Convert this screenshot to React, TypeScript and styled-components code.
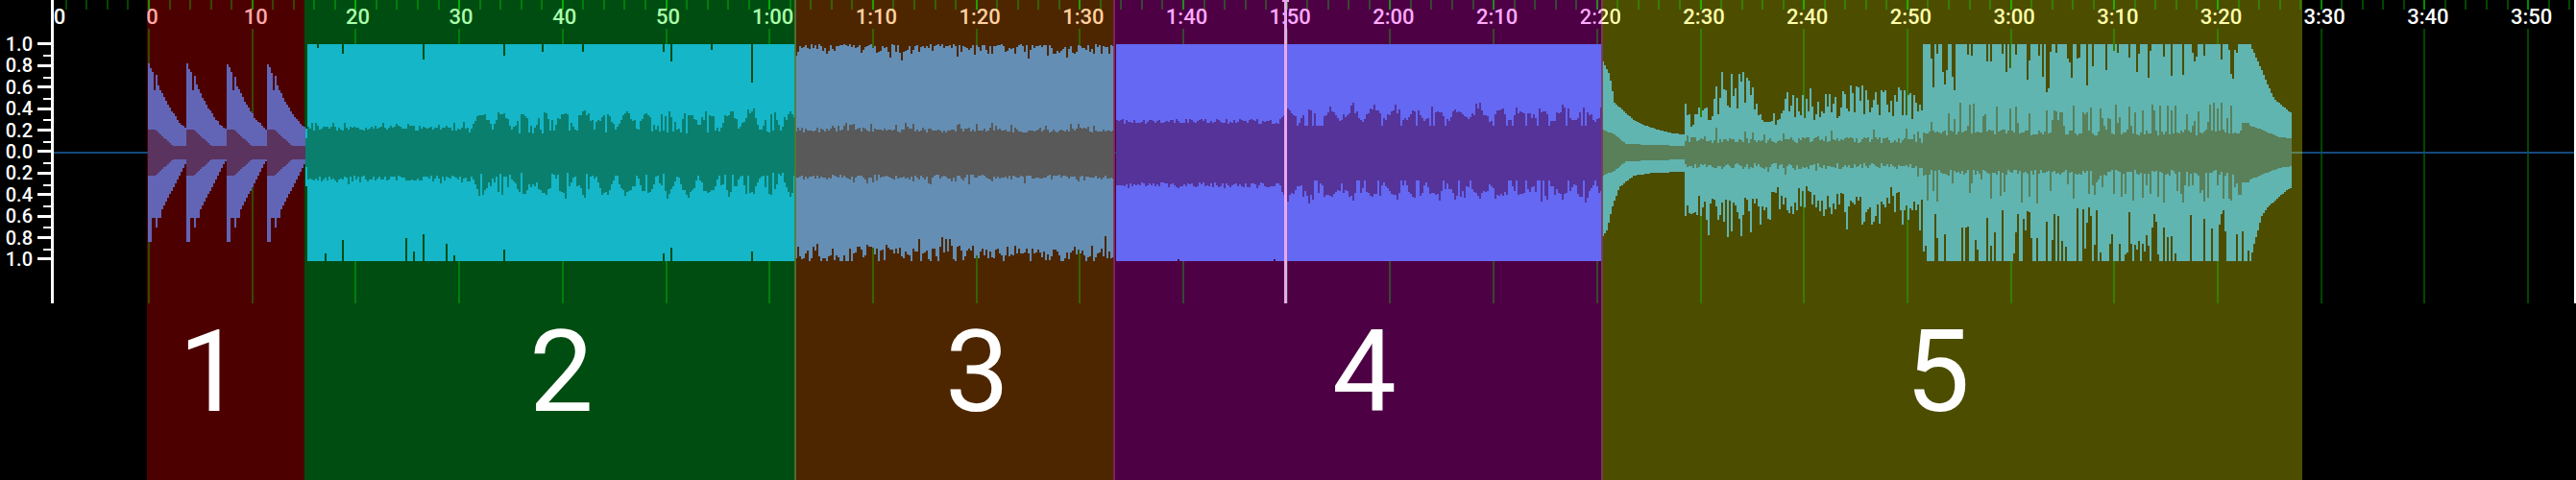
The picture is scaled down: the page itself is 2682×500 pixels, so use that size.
import React from "react";
import styled, { createGlobalStyle } from "styled-components";

const CX = 159;
const TOP = 46;
const BOTTOM = 272;
const PX_PER_SEC = 10.77;
const ZERO = 154;

const GlobalStyle = createGlobalStyle`
  html, body { margin: 0; padding: 0; background: #000; }
`;

const Page = styled.div`
  position: relative;
  width: 2682px;
  height: 500px;
  overflow: hidden;
  background: #000;
  font-family: Roboto, "Liberation Sans", Arial, sans-serif;
`;

const Sections = styled.div`
  display: flex;
  height: 500px;
  padding-left: 153px;
`;

const Section = styled.div<{ $bg: string; $width: number; $numberLeft: number }>`
  width: ${(p) => p.$width}px;
  height: 100%;
  box-sizing: border-box;
  padding-top: 329px;
  padding-left: ${(p) => p.$numberLeft}px;
  background: ${(p) => p.$bg};
`;

const SectionNumber = styled.span`
  display: block;
  font-size: 119px;
  line-height: 118px;
  color: #fff;
`;

const Chart = styled.svg`
  position: absolute;
  left: 0;
  top: 0;
  shape-rendering: crispEdges;
`;

const TimeLabel = styled.span<{ $color: string; $split?: string }>`
  position: absolute;
  top: 5px;
  transform: translateX(-50%);
  font-size: 22px;
  line-height: 26px;
  font-weight: 500;
  white-space: nowrap;
  color: ${(p) => (p.$split ? "transparent" : p.$color)};
  ${(p) =>
    p.$split &&
    `background: linear-gradient(90deg, ${p.$color} ${p.$split}, #ffffaa ${p.$split});
     -webkit-background-clip: text;
     background-clip: text;`}
`;

const YAxis = styled.div`
  position: absolute;
  left: 0;
  top: 0;
  width: 53px;
  padding-top: 34.8px;
  height: 281.2px;
  border-right: 3px solid #fff;
`;

const ScaleRow = styled.div<{ $minor: boolean }>`
  position: relative;
  display: flex;
  align-items: center;
  justify-content: flex-end;
  height: 22.4px;
  color: #fff;
  font-size: 20px;
  font-weight: 500;
  line-height: 22px;

  &::before {
    content: "";
    display: ${(p) => (p.$minor ? "block" : "none")};
    position: absolute;
    right: 0;
    top: 22.4px;
    width: 8px;
    height: 2px;
    background: #fff;
  }
`;

const ScaleText = styled.span`
  margin-right: 5px;
`;

const ScaleMark = styled.i`
  display: block;
  width: 14px;
  height: 3px;
  background: #fff;
`;

const Cursor = styled.div`
  position: absolute;
  left: 1337px;
  top: 0;
  width: 3px;
  height: 316px;
  background: #eea6ee;

  &::before {
    content: "";
    position: absolute;
    left: -2px;
    top: 0;
    width: 7px;
    height: 2px;
    background: #eea6ee;
  }
`;

const RightEdge = styled.div`
  position: absolute;
  right: 0;
  top: 0;
  width: 2px;
  height: 316px;
  background: #fff;
`;

function rng(seed: number) {
  return () => {
    seed |= 0;
    seed = (seed + 0x6d2b79f5) | 0;
    let t = Math.imul(seed ^ (seed >>> 15), 1 | seed);
    t = (t + Math.imul(t ^ (t >>> 7), 61 | t)) ^ t;
    return ((t ^ (t >>> 14)) >>> 0) / 4294967296;
  };
}

function lerp(table: number[][], x: number) {
  for (let i = 1; i < table.length; i++) {
    if (x <= table[i][0]) {
      const [x0, y0] = table[i - 1];
      const [x1, y1] = table[i];
      return y0 + ((y1 - y0) * (x - x0)) / (x1 - x0);
    }
  }
  return table[table.length - 1][1];
}

type Col = [number, number, number, number]; // peak top, rms top, rms bottom, peak bottom

const clampY = (y: number) => Math.round(Math.max(TOP, Math.min(BOTTOM, y)));

const notch2Top: Record<number, number> = { 330: 50, 356: 56, 440: 62, 524: 58, 564: 54, 606: 54, 690: 54, 698: 64, 740: 52, 782: 86 };
const notch2Bot: Record<number, number> = { 338: 264, 356: 250, 422: 248, 430: 262, 440: 244, 464: 254, 472: 266, 524: 260, 690: 264, 698: 258, 782: 262 };

const r1 = rng(11);
function col1(x: number): Col {
  const starts = [154, 194, 236, 278];
  let b = starts[0];
  for (const s of starts) if (x >= s) b = s;
  const u = x - b;
  const k = Math.max(0, 1 - u / 42);
  let top = 24 + 69 * Math.pow(k, 1.5);
  if (u >= 6 && u < 8) top -= 14;
  if (u >= 8 && u < 10) top += 6;
  top += (r1() - 0.5) * 2;
  const rms = Math.max(7, 24 - Math.max(0, u - 7) * 0.95);
  let bot = u < 3 ? 93 : u < 13 ? 68 : Math.max(9, 61 - (u - 13) * 1.95);
  if (u >= 8 && u < 10) bot = 78;
  return [CX - top, CX - rms, CX + rms, CX + bot];
}

const r2 = rng(23);
function col2(x: number): Col {
  if (x < 320) return [CX - 25, CX - 15, CX + 15, CX + 35];
  const t = notch2Top[x] ?? TOP;
  const b = notch2Bot[x] ?? BOTTOM;
  if (x < 488) {
    return [t, CX - (23 + r2() * 5 + (r2() < 0.15 ? 4 : 0)), CX + (24 + r2() * 6 + (r2() < 0.15 ? 3 : 0)), b];
  }
  const beat = Math.pow(Math.abs(Math.sin(((x - 490) / 21.5) * Math.PI)), 1.2);
  const at = r2() < 0.15 ? 20 + r2() * 4 : 22 + beat * 17 + r2() * r2() * 10;
  const ab = r2() < 0.15 ? 21 + r2() * 4 : 23 + beat * 18 + r2() * r2() * 10;
  return [t, CX - at, CX + ab, b];
}

const r3 = rng(37);
function col3(x: number): Col {
  const topPeak = TOP + (r3() < 0.55 ? r3() * 4 : r3() * 10) + (r3() < 0.1 ? 8 : 0);
  const botPeak = BOTTOM - (r3() < 0.12 ? 0 : r3() * 16) - (r3() < 0.15 ? r3() * 12 : 0);
  return [topPeak, CX - (21 + r3() * 5 + (r3() < 0.12 ? 5 : 0)), CX + (23 + r3() * 5 + (r3() < 0.12 ? 5 : 0)), botPeak];
}

const r4 = rng(41);
function col4(x: number): Col {
  const bot = x === 1226 || x === 1326 ? BOTTOM - 2 : BOTTOM;
  if (x < 1330) {
    return [TOP, CX - (30 + r4() * 5), CX + (31 + r4() * 6), bot];
  }
  const beat = Math.pow(Math.abs(Math.sin(((x - 1330) / 22) * Math.PI)), 1.2);
  const at = r4() < 0.15 ? 28 : 30 + beat * 12 + r4() * r4() * 12;
  const ab = r4() < 0.15 ? 29 : 31 + beat * 12 + r4() * r4() * 12;
  return [TOP, CX - at, CX + ab, bot];
}

const peaks5T = [[1754, 81], [1760, 41], [1772, 59], [1785, 74], [1794, 93], [1804, 87], [1812, 89], [1830, 81], [1840, 44], [1858, 61], [1865, 69], [1885, 69], [1900, 69], [1925, 81], [1945, 81], [1965, 74], [1985, 74], [2002, 59]];
const peaks5B = [[1754, 83], [1790, 89], [1805, 98], [1830, 77], [1860, 66], [1885, 66], [1925, 85], [1945, 91], [1965, 66], [1990, 86], [2002, 90]];
const r5 = rng(59);
function col5(x: number): Col {
  if (x < 1753) {
    const top = lerp([[1667, 97], [1675, 81], [1680, 52], [1690, 43], [1700, 34], [1710, 29], [1725, 24], [1740, 20], [1753, 19]], x);
    const bot = lerp([[1667, 89], [1672, 81], [1678, 56], [1685, 36], [1700, 24], [1720, 21], [1753, 20]], x);
    const rms = lerp([[1667, 24], [1680, 19], [1692, 9], [1753, 7]], x);
    return [CX - top, CX - rms, CX + rms, CX + bot];
  }
  if (x < 2002) {
    const pt = lerp(peaks5T, x);
    const pb = lerp(peaks5B, x);
    const a = pt * 0.48 + pt * 0.52 * Math.pow(r5(), 1.3);
    const c = pb * 0.52 + pb * 0.48 * Math.pow(r5(), 1.1);
    const rt = 10 + r5() * 6 + (r5() < 0.12 ? r5() * 14 : 0);
    const rb = 11 + r5() * 6 + (r5() < 0.12 ? r5() * 14 : 0);
    return [CX - a, CX - rt, CX + rb, CX + c];
  }
  const rt = 18 + r5() * 6 + (r5() < 0.3 ? 8 + r5() * 24 : 0);
  const rb = 18 + r5() * 6 + (r5() < 0.3 ? 8 + r5() * 24 : 0);
  if (x < 2342) {
    const t = r5() < 0.35 ? TOP + 6 + Math.pow(r5(), 1.5) * 44 : TOP;
    const b = r5() < 0.38 ? BOTTOM - 6 - r5() * 50 : BOTTOM;
    return [t, x < 2333 ? CX - rt : CX - 31, x < 2333 ? CX + rb : CX + 31, b];
  }
  const top = lerp([[2342, 113], [2354, 86], [2360, 71], [2367, 56], [2381, 44], [2386, 41]], x);
  const bot = lerp([[2342, 113], [2345, 99], [2354, 66], [2360, 57], [2370, 48], [2381, 38], [2386, 37]], x);
  const rmsT = lerp([[2342, 28], [2354, 24], [2372, 16], [2386, 15]], x);
  const rmsB = lerp([[2342, 28], [2354, 23], [2372, 16], [2386, 14]], x);
  return [CX - top, CX - rmsT, CX + rmsB, CX + bot];
}

function buildPaths(from: number, to: number, fn: (x: number) => Col) {
  const cols: Col[] = [];
  for (let x = from; x < to; x += 2) cols.push(fn(x).map(clampY) as Col);
  const shape = (a: number, b: number) => {
    let d = `M${from} ${cols[0][a]}`;
    cols.forEach((c, i) => {
      d += `H${from + i * 2}V${c[a]}H${from + i * 2 + 2}`;
    });
    for (let i = cols.length - 1; i >= 0; i--) {
      d += `V${cols[i][b]}H${from + i * 2}`;
    }
    return d + "Z";
  };
  return { peak: shape(0, 3), rms: shape(1, 2) };
}

const sections = [
  { n: 1, from: 153, to: 317, wave: [154, 318], bg: "#4d0000", text: "#ffa8a8", peak: "#6265b5", rms: "#5a335e", numberLeft: 33, fn: col1, divider: "" },
  { n: 2, from: 317, to: 827, wave: [318, 828], bg: "#004d11", text: "#aaffaa", peak: "#14b6c8", rms: "#0b7f6d", numberLeft: 234, fn: col2, divider: "" },
  { n: 3, from: 827, to: 1159, wave: [828, 1160], bg: "#4d2600", text: "#ffd0a0", peak: "#648eb4", rms: "#595959", numberLeft: 157, fn: col3, divider: "#4f7a34" },
  { n: 4, from: 1159, to: 1667, wave: [1162, 1668], bg: "#4d0044", text: "#ffaaff", peak: "#6468f3", rms: "#553399", numberLeft: 228, fn: col4, divider: "#8a2a5a" },
  { n: 5, from: 1667, to: 2397, wave: [1668, 2386], bg: "#4d4d00", text: "#ffffaa", peak: "#60b5b0", rms: "#5a805a", numberLeft: 317, fn: col5, divider: "#7d3a5a" },
];

const waves = sections.map((s) => buildPaths(s.wave[0], s.wave[1], s.fn));

const tickTimes: number[] = [];
for (let t = -8; t <= 238; t += 2) tickTimes.push(t);

function formatTime(t: number) {
  if (t < 60) return String(t);
  const m = Math.floor(t / 60);
  const s = t % 60;
  return `${m}:${s < 10 ? "0" : ""}${s}`;
}

function tintAt(x: number) {
  const s = sections.find((sec) => x >= sec.from && x < sec.to);
  return s ? s.text : "#fff";
}

const scale = ["1.0", "0.8", "0.6", "0.4", "0.2", "0.0", "0.2", "0.4", "0.6", "0.8", "1.0"];

export default function App() {
  return (
    <Page>
      <GlobalStyle />
      <Sections>
        {sections.map((s) => (
          <Section key={s.n} $bg={s.bg} $width={s.to - s.from} $numberLeft={s.numberLeft}>
            <SectionNumber>{s.n}</SectionNumber>
          </Section>
        ))}
      </Sections>

      <Chart width={2682} height={500} viewBox="0 0 2682 500">
        {tickTimes.map((t) => {
          const x = Math.round(ZERO + t * PX_PER_SEC);
          const major = t % 10 === 0;
          return (
            <g key={t}>
              <rect x={x} y={0} width={2} height={10} fill={major ? "rgba(0,255,0,0.55)" : "rgba(0,255,0,0.28)"} />
              {major && <rect x={x} y={30} width={2} height={286} fill="rgba(0,255,0,0.28)" />}
            </g>
          );
        })}
        <rect x={56} y={158} width={2626} height={2} fill="#164a7c" />
        <rect x={2386} y={158} width={11} height={2} fill="#5a805a" />
        {sections.map((s, i) => (
          <g key={s.n}>
            <path d={waves[i].peak} fill={s.peak} />
            <path d={waves[i].rms} fill={s.rms} />
            {s.divider && <rect x={s.from} y={0} width={2} height={500} fill={s.divider} opacity={0.85} />}
          </g>
        ))}
      </Chart>

      <TimeLabel $color="#fff" style={{ left: 62 }}>0</TimeLabel>
      {Array.from({ length: 24 }, (_, i) => i * 10).map((t) => {
        const tick = ZERO + t * PX_PER_SEC;
        const x = tick + (t >= 20 && t <= 50 ? 3 : 4.5);
        return (
          <TimeLabel
            key={t}
            $color={tintAt(x)}
            $split={t === 140 ? "53%" : undefined}
            style={{ left: x }}
          >
            {formatTime(t)}
          </TimeLabel>
        );
      })}

      <YAxis>
        {scale.map((v, i) => (
          <ScaleRow key={i} $minor={i < scale.length - 1}>
            <ScaleText>{v}</ScaleText>
            <ScaleMark />
          </ScaleRow>
        ))}
      </YAxis>

      <Cursor />
      <RightEdge />
    </Page>
  );
}
